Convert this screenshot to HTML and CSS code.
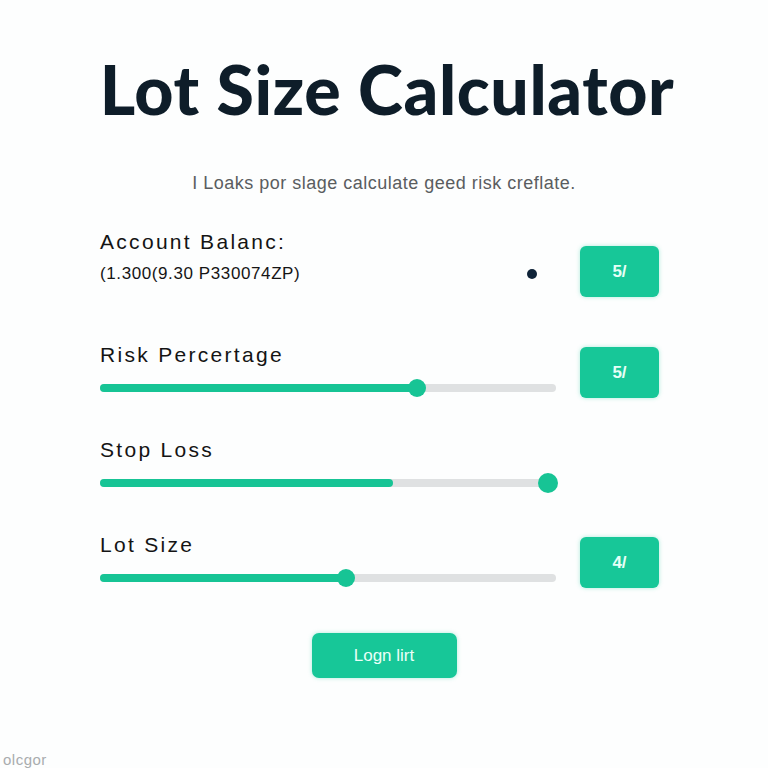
FILE: index.html
```html
<!DOCTYPE html>
<html lang="en">
<head>
    <meta charset="UTF-8">
    <meta name="viewport" content="width=device-width, initial-scale=1.0">
    <title>Lot Size Calculator</title>
    <link rel="stylesheet" href="styles.css">
</head>
<body>

    <div class="page">
        <h1 class="title">Lot Size Calculator</h1>
        <p class="subtitle">I Loaks por slage calculate geed risk creflate.</p>

        <div class="calc">
            <div class="row row-account">
                <div class="field">
                    <div class="label">Account Balanc:</div>
                    <div class="balance">
                        <span>(1.300(9.30 P330074ZP)</span>
                        <span class="dot"></span>
                    </div>
                </div>
                <button class="value-btn">5/</button>
            </div>

            <div class="row">
                <div class="field">
                    <div class="label">Risk Percertage</div>
                    <div class="slider">
                        <div class="fill" style="width: 317px"></div>
                        <div class="knob" style="left: 317px"></div>
                    </div>
                </div>
                <button class="value-btn">5/</button>
            </div>

            <div class="row">
                <div class="field">
                    <div class="label">Stop Loss</div>
                    <div class="slider">
                        <div class="fill" style="width: 293px"></div>
                        <div class="knob knob-big" style="left: 448px"></div>
                    </div>
                </div>
            </div>

            <div class="row">
                <div class="field">
                    <div class="label">Lot Size</div>
                    <div class="slider">
                        <div class="fill" style="width: 246px"></div>
                        <div class="knob" style="left: 246px"></div>
                    </div>
                </div>
                <button class="value-btn">4/</button>
            </div>
        </div>

        <div class="actions">
            <button class="main-btn">Logn lirt</button>
        </div>

        <div class="corner">olcgor</div>
    </div>

</body>
</html>
```

FILE: styles.css
```css
body {
    margin: 0;
    background-color: #fdfefe;
    font-family: "Liberation Sans", Arial, sans-serif;
    color: #111;
}

.page {
    width: 768px;
    height: 768px;
    overflow: hidden;
}

.title {
    margin: 49px 0 0;
    padding-left: 6px;
    text-align: center;
    font-family: Lato, "Open Sans", sans-serif;
    font-weight: 900;
    font-size: 68px;
    line-height: 80px;
    color: #0e1d29;
    letter-spacing: 0.6px;
}

.subtitle {
    margin: 44px 0 0;
    text-align: center;
    font-size: 18px;
    line-height: 20px;
    letter-spacing: 0.5px;
    color: #5a5d60;
}

.calc {
    display: flex;
    flex-direction: column;
    gap: 37px;
    width: 559px;
    margin: 37px 0 0 100px;
}

.row {
    display: flex;
    align-items: flex-start;
    gap: 24px;
    height: 58px;
}

.row-account {
    height: 69px;
    margin-bottom: 7px;
}

.field {
    width: 456px;
}

.label {
    font-size: 21px;
    line-height: 24px;
    letter-spacing: 2.3px;
    color: #141414;
}

.balance {
    display: flex;
    justify-content: space-between;
    align-items: center;
    margin-top: 10px;
    padding-right: 19px;
    font-size: 17px;
    line-height: 20px;
    letter-spacing: 0.6px;
    color: #151515;
}

.dot {
    width: 10px;
    height: 10px;
    border-radius: 50%;
    background: #0f2338;
}

.value-btn {
    width: 79px;
    height: 51px;
    border: none;
    border-radius: 6px;
    background-color: #17c798;
    color: #e6fff7;
    font-family: "Liberation Sans", Arial, sans-serif;
    font-size: 17px;
    font-weight: 700;
    box-shadow: 0 0 4px rgba(23, 199, 152, 0.35);
}

.row .value-btn {
    margin-top: 4px;
}

.row-account .value-btn {
    margin-top: 16px;
}

.slider {
    position: relative;
    height: 18px;
    margin-top: 12px;
}

.slider::before {
    content: "";
    position: absolute;
    left: 0;
    right: 0;
    top: 5px;
    height: 8px;
    border-radius: 4px;
    background: #dfe1e2;
}

.fill {
    position: absolute;
    left: 0;
    top: 5px;
    height: 8px;
    border-radius: 4px;
    background: #17c495;
}

.knob {
    position: absolute;
    top: 0;
    width: 18px;
    height: 18px;
    margin-left: -9px;
    border-radius: 50%;
    background: #17c495;
}

.knob-big {
    top: -1px;
    width: 20px;
    height: 20px;
    margin-left: -10px;
}

.actions {
    display: flex;
    justify-content: center;
    margin-top: 42px;
}

.main-btn {
    width: 145px;
    height: 45px;
    border: none;
    border-radius: 7px;
    background-color: #17c798;
    color: #eafff8;
    font-family: "Liberation Sans", Arial, sans-serif;
    font-size: 17px;
    box-shadow: 0 0 4px rgba(23, 199, 152, 0.35);
}

.corner {
    margin: 73px 0 0 3px;
    font-size: 15px;
    letter-spacing: 0.5px;
    color: #a9acae;
}
```
